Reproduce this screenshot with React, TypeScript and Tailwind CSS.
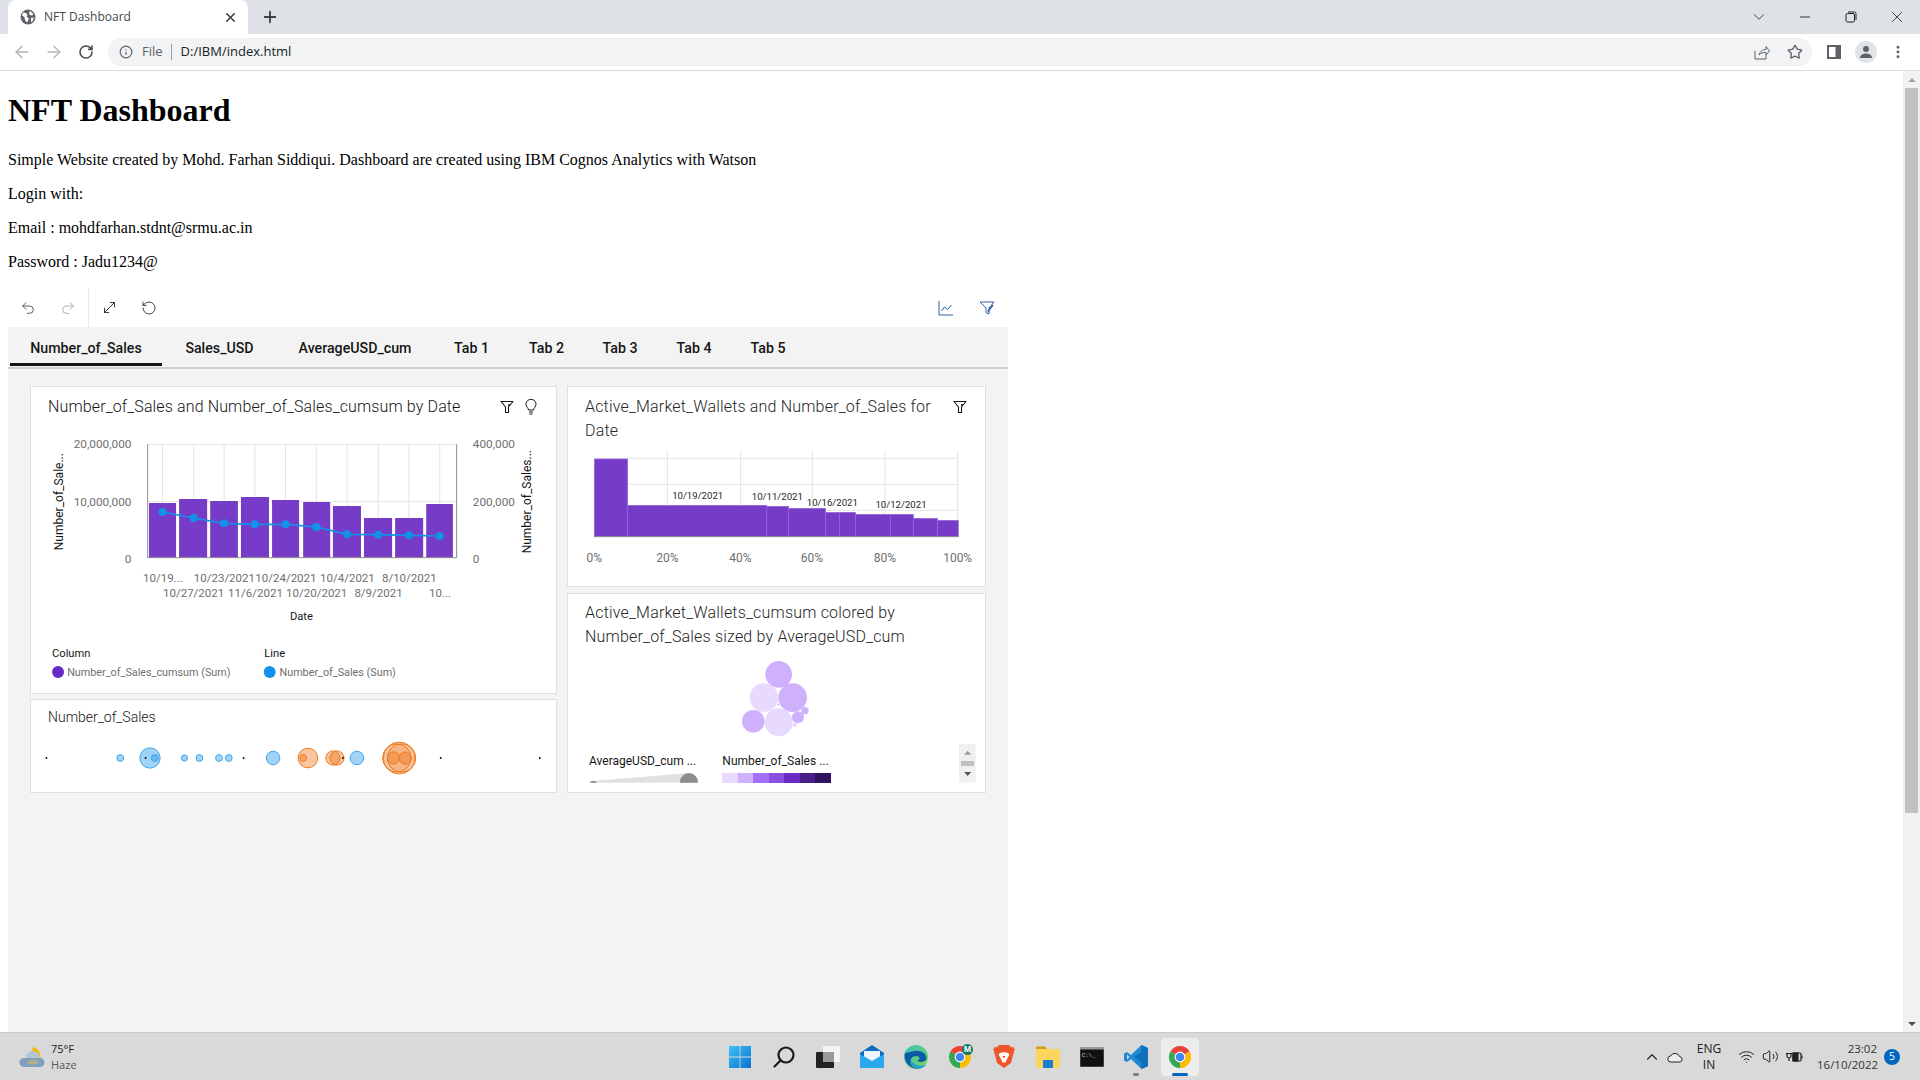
import React from "react";
import { ArrowLeft, ArrowRight, RotateCw, Info, Star, ChevronDown, Minus, X, Plus, Undo2, Redo2, MoveDiagonal, RotateCcw, ChevronUp, Wifi, Volume2, MoreVertical } from "lucide-react";

const PLOT = "#6f6f6f";

function Funnel() {
  const c = "#161616";
  return (
    <svg width="14" height="14" viewBox="0 0 14 14" fill="none" stroke={c} strokeWidth="1.100">
      <path d="M1 1.500h12L8.500 7v5.500h-3V7z" strokeLinejoin="round" />
      <circle cx="9" cy="5" r="1" fill={c} stroke="none" />
    </svg>
  );
}

function Bulb() {
  return (
    <svg width="14" height="16" viewBox="0 0 14 16" fill="none" stroke="#161616" strokeWidth="1">
      <path d="M4.500 11c0-2-2.500-3-2.500-5.700a5 5 0 0 1 10 0C12 8 9.500 9 9.500 11z" />
      <path d="M5 13h4M5.500 15h3" />
    </svg>
  );
}

const cx1 = (z: number) => z / 2.958 - 1;
const cy1 = (z: number) => z / 3 - 42;

const bars1 = [[352, 432, 354], [441, 524, 342], [533, 615, 348], [624, 707, 336], [716, 796, 345], [808, 888, 351], [896, 979, 363], [988, 1071, 399], [1080, 1163, 399], [1172, 1251, 357]];
const line1 = [[392, 381], [484, 399], [574, 415], [665, 418], [756, 418], [847, 426], [938, 448], [1030, 449], [1121, 451], [1212, 453]];
const xLabels = [["10/19...", 393, 579], ["10/27/2021", 484, 624], ["10/23/2021", 575, 579], ["11/6/2021", 667, 624], ["10/24/2021", 757, 579], ["10/20/2021", 848, 624], ["10/4/2021", 939, 579], ["8/9/2021", 1031, 624], ["8/10/2021", 1122, 579], ["10...", 1213, 624]] as const;

function ComboChart() {
  return (
    <svg width="525" height="266" className="block">
      <g stroke="#e4e4e4" strokeWidth="1">
        {line1.map(([x]) => <line key={x} x1={cx1(x)} x2={cx1(x)} y1={cy1(178)} y2={cy1(518)} />)}
        <line x1={cx1(348)} x2={cx1(1262)} y1={cy1(178)} y2={cy1(178)} />
        <line x1={cx1(348)} x2={cx1(1262)} y1={cy1(350)} y2={cy1(350)} />
      </g>
      {bars1.map(([a, b, t]) => <rect key={a} x={cx1(a)} y={cy1(t)} width={cx1(b) - cx1(a)} height={cy1(518) - cy1(t)} fill="#763cc8" />)}
      <path d={`M${cx1(348)} ${cy1(178)}V${cy1(518)}H${cx1(1262)}V${cy1(178)}`} fill="none" stroke="#8d8d8d" strokeWidth="1" />
      <polyline points={line1.map(([x, y]) => `${cx1(x)},${cy1(y)}`).join(" ")} fill="none" stroke="#1192e8" strokeWidth="1.700" />
      {line1.map(([x, y]) => <circle key={x} cx={cx1(x)} cy={cy1(y)} r="4" fill="#1192e8" />)}
      <g fontSize="11.800" fill={PLOT}>
        <text x={cx1(300)} y={cy1(177) + 4} textAnchor="end">20,000,000</text>
        <text x={cx1(300)} y={cy1(351) + 4} textAnchor="end">10,000,000</text>
        <text x={cx1(300)} y={cy1(521) + 4} textAnchor="end">0</text>
        <text x={cx1(1310)} y={cy1(177) + 4}>400,000</text>
        <text x={cx1(1310)} y={cy1(351) + 4}>200,000</text>
        <text x={cx1(1310)} y={cy1(521) + 4}>0</text>
      </g>
      <g fontSize="11.500" fill={PLOT}>
        {xLabels.map(([t, x, y]) => <text key={t} x={cx1(x)} y={cy1(y) + 4} textAnchor="middle">{t}</text>)}
      </g>
      <g fontSize="12" fill="#161616">
        <text transform={`translate(${cx1(98)} ${cy1(350)}) rotate(-90)`} textAnchor="middle">Number_of_Sale...</text>
        <text transform={`translate(${cx1(1482)} ${cy1(350)}) rotate(-90)`} textAnchor="middle">Number_of_Sales...</text>
      </g>
      <g fontSize="11.200" fill="#161616">
        <text x={cx1(803)} y={cy1(693) + 4} textAnchor="middle">Date</text>
        <text x={cx1(65)} y={cy1(805) + 4}>Column</text>
        <text x={cx1(693)} y={cy1(805) + 4}>Line</text>
      </g>
      <circle cx={cx1(83)} cy={cy1(861)} r="6" fill="#6929c4" />
      <circle cx={cx1(709)} cy={cy1(861)} r="6" fill="#1192e8" />
      <g fontSize="10.800" fill={PLOT}>
        <text x={cx1(110)} y={cy1(861) + 4}>Number_of_Sales_cumsum (Sum)</text>
        <text x={cx1(738)} y={cy1(861) + 4}>Number_of_Sales (Sum)</text>
      </g>
    </svg>
  );
}

const blue = [[267, 10], [355, 30], [369, 10], [457, 9], [501, 10], [559, 10], [588, 10], [719, 20], [967, 20]];
const orange = [[822, 29, 0.42], [808, 10, 0.42], [896, 21, 0.42], [908, 21, 0.42], [1092, 47, 0.3], [1085, 42, 0.2], [1099, 42, 0.2], [1075, 18, 0.45], [1110, 18, 0.45]];
const ticks = [48, 341, 631, 925, 1214, 1507];

function PackedDots() {
  const x = (z: number) => z / 2.958 - 1;
  return (
    <svg width="525" height="50" className="block">
      {blue.map(([c, r]) => <circle key={c} cx={x(c)} cy={23} r={r / 2.958} fill="#1192e8" fillOpacity="0.4" stroke="#3da5ee" strokeWidth="1" />)}
      {orange.map(([c, r, o], i) => <circle key={i} cx={x(c)} cy={23} r={r / 2.958} fill="#ee7a1e" fillOpacity={o} stroke="#ee7a1e" strokeWidth="1" />)}
      {ticks.map((c) => <rect key={c} x={x(c) - 0.5} y={22} width="1.500" height="2" fill="#161616" />)}
    </svg>
  );
}

const bars3 = [[88, 188, 222], [188, 605, 361], [605, 671, 364], [671, 782, 370], [782, 823, 382], [823, 871, 382], [871, 976, 388], [976, 1045, 388], [1045, 1117, 400], [1117, 1180, 406]];

function MarimekkoChart() {
  const x = (z: number) => z / 3 - 3;
  const y = (z: number) => z / 3 - 58;
  return (
    <svg width="417" height="143" className="block">
      <g stroke="#e4e4e4">
        {[307, 527, 742, 960, 1178].map((v) => <line key={v} x1={x(v)} x2={x(v)} y1={y(196)} y2={y(455)} />)}
        {[220, 298, 376].map((v) => <line key={v} x1={x(88)} x2={x(1180)} y1={y(v)} y2={y(v)} />)}
      </g>
      {bars3.map(([a, b, t]) => <rect key={a} x={x(a)} y={y(t)} width={x(b) - x(a)} height={y(455) - y(t)} fill="#763cc8" stroke="#9468d6" strokeWidth="0.700" />)}
      <line x1={x(88)} x2={x(1180)} y1={y(455)} y2={y(455)} stroke="#8d8d8d" />
      <g fontSize="9.600" fill="#262626" textAnchor="middle">
        <text x={x(398)} y={y(330) + 4}>10/19/2021</text>
        <text x={x(637)} y={y(332) + 4}>10/11/2021</text>
        <text x={x(802)} y={y(351) + 4}>10/16/2021</text>
        <text x={x(1008)} y={y(356) + 4}>10/12/2021</text>
      </g>
      <g fontSize="12" fill={PLOT} textAnchor="middle">
        {[["0%", 88], ["20%", 307], ["40%", 526], ["60%", 741], ["80%", 960], ["100%", 1178]].map(([t, v]) => <text key={t} x={x(v as number)} y={y(520) + 4}>{t}</text>)}
      </g>
    </svg>
  );
}

const bubbles = [[641, 253, 40, "#cfb0fd"], [597, 323, 43, "#e8daff"], [683, 323, 43, "#cfb0fd"], [565, 394, 34, "#cfb0fd"], [641, 397, 42, "#e8daff"], [699, 382, 18, "#cfb0fd"], [720, 362, 11, "#cfb0fd"], [689, 405, 7, "#e8daff"], [640, 343, 2, "#8a5ae0"]] as const;
const swatches = [[471, 519, "#e8daff"], [519, 564, "#d0b0ff"], [564, 612, "#a56eff"], [612, 657, "#8a4fe0"], [657, 705, "#6929c4"], [705, 750, "#491d8b"], [750, 798, "#31135e"]] as const;

function BubbleChart() {
  const x = (z: number) => z / 3 - 3;
  const y = (z: number) => z / 3 - 60;
  return (
    <svg width="417" height="142" className="block">
      {bubbles.map(([a, b, r, c], i) => <circle key={i} cx={x(a)} cy={y(b)} r={r / 3} fill={c} />)}
      <text x={x(72)} y={y(513) + 4} fontSize="12" fill="#161616">AverageUSD_cum ...</text>
      <text x={x(472)} y={y(513) + 4} fontSize="12" fill="#161616">Number_of_Sales ...</text>
      <clipPath id="sizeclip"><rect x="0" y="0" width="417" height={y(578)} /></clipPath>
      <g clipPath="url(#sizeclip)">
        <polygon points={`${x(85)},${y(573)} ${x(372)},${y(549)} ${x(372)},${y(600)} ${x(85)},${y(600)}`} fill="#e0e0e0" />
        <circle cx={x(85)} cy={y(584)} r="4" fill="#8d8d8d" />
        <circle cx={x(372)} cy={y(576)} r="9" fill="#8d8d8d" />
      </g>
      {swatches.map(([a, b, c]) => <rect key={a} x={x(a)} y={y(549)} width={(b - a) / 3} height={10} fill={c} />)}
      <rect x={x(1182)} y={y(462)} width={50 / 3} height={116 / 3} fill="#f0f0f0" />
      <path d={`M${x(1208)} ${y(482)}l3.500 4h-7z`} fill="#9a9a9a" />
      <rect x={x(1188)} y={y(513)} width={13} height={5} fill="#c0c0c0" />
      <path d={`M${x(1208)} ${y(558)}l3.500 -4h-7z`} fill="#555" />
    </svg>
  );
}

function Chrome({ s = 24 }: { s?: number }) {
  return (
    <svg width={s} height={s} viewBox="0 0 24 24">
      <path d="M12 12L2.470 6.500A11 11 0 0 1 21.530 6.500z" fill="#ea4335" />
      <path d="M12 12L21.530 6.500A11 11 0 0 1 12 23z" fill="#fbbc04" />
      <path d="M12 12L12 23A11 11 0 0 1 2.470 6.500z" fill="#34a853" />
      <circle cx="12" cy="12" r="5.400" fill="#fff" />
      <circle cx="12" cy="12" r="4.300" fill="#4285f4" />
    </svg>
  );
}

const taskIcons: React.ReactNode[] = [
  <svg width="24" height="24" viewBox="0 0 24 24" key="win">
    <defs><linearGradient id="wg" x1="0" y1="0" x2="1" y2="1"><stop offset="0" stopColor="#3cc3f5" /><stop offset="1" stopColor="#0a6fd0" /></linearGradient></defs>
    <path d="M1 1h10.600v10.600H1zM12.400 1H23v10.600H12.400zM1 12.400h10.600V23H1zM12.400 12.400H23V23H12.400z" fill="url(#wg)" />
  </svg>,
  <svg width="24" height="24" viewBox="0 0 24 24" fill="none" stroke="#1a1a1a" strokeWidth="2.200" key="search">
    <circle cx="14" cy="10" r="7.500" /><path d="M8.500 15.500L2.500 21.500" strokeLinecap="round" />
  </svg>,
  <svg width="24" height="24" viewBox="0 0 24 24" key="tv">
    <rect x="7" y="1" width="17" height="16" rx="1" fill="#f4f4f4" />
    <rect x="0" y="7" width="18" height="16" rx="1" fill="#222" />
    <rect x="7" y="7" width="11" height="10" fill="#9a9a9a" />
  </svg>,
  <svg width="26" height="24" viewBox="0 0 26 24" key="mail">
    <path d="M13 0L25 8v14H1V8z" fill="#0f6cbd" />
    <path d="M5 6h16v9l-8 4-8-4z" fill="#eaf6ff" />
    <path d="M1 9l12 7 12-7v14H1z" fill="#28a8ea" />
  </svg>,
  <svg width="24" height="24" viewBox="0 0 24 24" key="edge">
    <defs><linearGradient id="eg" x1="0" y1="0" x2="1" y2="1"><stop offset="0" stopColor="#35c1c1" /><stop offset="1" stopColor="#7ad25a" /></linearGradient></defs>
    <circle cx="12" cy="12" r="12" fill="url(#eg)" />
    <path d="M1 8C-1 18 8 25 16 23.500 9 24 5 19 7 14c1-3 6-4 8-2 1 2 0 3-2 3.500 2 2 6 2 9-.500C24 9 17 5 11 6 6 6.500 3 8 1 8z" fill="#0c59a4" />
    <path d="M7 14c-1 5 3 9 8 9.500 3 0 6-2 7-4-4 2-9 2-12-1-2-1.500-3-3-3-4.500z" fill="#1b9de2" />
  </svg>,
  <div className="relative" key="cm">
    <Chrome />
    <div className="absolute -top-[1px] -right-[1px] w-[11px] h-[11px] rounded-full bg-[#0f7a6c] flex items-center justify-center text-white text-[8px] leading-none font-bold">M</div>
  </div>,
  <svg width="22" height="25" viewBox="0 0 22 25" key="brave">
    <path d="M6 1h10l2.500 2.500L21 3l.5 3-1 3.500L18 19l-7 5-7-5L1.500 9.500.5 6 1 3l2.500.5z" fill="#f1562b" />
    <path d="M7 9l4-1 4 1 1.500 1.500L14 15l-1.500 3.500h-3L8 15 5.500 10.500z" fill="#fff" />
    <path d="M9.500 12h3L11 14.500z" fill="#f1562b" />
  </svg>,
  <svg width="24" height="22" viewBox="0 0 24 22" key="folder">
    <path d="M0 2a1.500 1.500 0 0 1 1.500-1.500H9L11 3h-11z" fill="#d69a17" />
    <rect x="0" y="3" width="24" height="19" rx="1.500" fill="#fbd65c" />
    <rect x="7" y="14" width="10" height="8" rx="1" fill="#1a7fd0" />
  </svg>,
  <svg width="24" height="20" viewBox="0 0 24 20" key="cmd">
    <rect x="0" y="0" width="24" height="20" fill="#111" stroke="#8a8a8a" strokeWidth="0.700" />
    <rect x="0" y="0" width="24" height="2.500" fill="#999" />
    <text x="2" y="9.500" fontSize="5.500" fill="#ddd" fontFamily="'Liberation Mono', monospace">C:\_</text>
  </svg>,
  <svg width="24" height="24" viewBox="0 0 24 24" key="vs">
    <path d="M17.500 0L24 3v18l-6.500 3L7 14l-4 3-3-1.500v-7L3 7l4 3z" fill="#1e88d2" />
    <path d="M17.500 0L24 3v18l-6.500 3zM17.500 6.500L10 12l7.500 5.500z" fill="#0f6fb8" fillRule="evenodd" />
    <path d="M3 9.500L5.500 12 3 14.500z" fill="#d9d9d9" />
  </svg>,
  <Chrome key="ch" />,
];

const tabs = [["Number_of_Sales", "w-[152px]", true], ["Sales_USD", "w-[115px]", false], ["AverageUSD_cum", "w-[156px]", false], ["Tab 1", "w-[77px]", false], ["Tab 2", "w-[73px]", false], ["Tab 3", "w-[74px]", false], ["Tab 4", "w-[74px]", false], ["Tab 5", "w-[74px]", false]] as const;

export default function App() {
  return (
    <div className="w-[1920px] h-[1080px] flex flex-col overflow-hidden bg-white font-['Roboto',sans-serif]">
      {/* tab strip */}
      <div className="h-[34px] bg-[#dee1e6] flex items-end shrink-0">
        <div className="ml-2 w-[240px] h-[34px] bg-white rounded-t-lg flex items-center pl-[12px] pr-[10px] font-['Open_Sans',sans-serif] text-[12px] text-[#45474a]">
          <svg width="16" height="16" viewBox="0 0 16 16" className="mr-[8px]">
            <circle cx="8" cy="8" r="7.500" fill="#5f6368" />
            <path d="M3 3.500l3 .5 1.500 2-1 1.500 2 1.500v2l-1.500 2.500L5 11 4.500 8 2 6.500zM10 2l3.500 3-1.500 1.500-2-.5-1-2zM11 9l3-.5-1.500 4L11 13z" fill="#fff" />
          </svg>
          <span>NFT Dashboard</span>
          <X size={15} strokeWidth={2.600} className="ml-auto text-[#3c4043]" />
        </div>
        <Plus size={18} strokeWidth={2.400} className="ml-[13px] mb-[8px] text-[#3c4043]" />
        <div className="ml-auto flex h-full items-center text-[#222]">
          <div className="w-[46px] flex justify-center"><ChevronDown size={18} strokeWidth={1.100} /></div>
          <div className="w-[46px] flex justify-center"><Minus size={16} strokeWidth={1.400} /></div>
          <div className="w-[46px] flex justify-center">
            <svg width="12" height="12" viewBox="0 0 12 12" fill="none" stroke="#222" strokeWidth="1"><rect x="1" y="2.500" width="8.500" height="8.500" rx="1.500" /><path d="M3 1h6.500A1.500 1.500 0 0 1 11 2.500V9" /></svg>
          </div>
          <div className="w-[46px] flex justify-center"><X size={18} strokeWidth={1.100} /></div>
        </div>
      </div>
      {/* toolbar */}
      <div className="h-[37px] shrink-0 border-b border-[#dadce0] flex items-center pl-[6px] text-[#5f6368]">
        <div className="w-[32px] flex justify-center"><ArrowLeft size={20} strokeWidth={1.800} className="text-[#b5b7ba]" /></div>
        <div className="w-[32px] flex justify-center"><ArrowRight size={20} strokeWidth={1.800} className="text-[#b5b7ba]" /></div>
        <div className="w-[32px] flex justify-center"><RotateCw size={16} strokeWidth={2.400} className="text-[#4a4d51]" /></div>
        <div className="ml-[6px] w-[1704px] h-[28px] rounded-full bg-[#f1f3f4] flex items-center pl-[11px] pr-0 font-['Open_Sans',sans-serif] text-[13px]">
          <Info size={14} className="text-[#5f6368]" />
          <span className="ml-[9px] text-[#5f6368]">File</span>
          <div className="ml-[8px] w-[1px] h-[16px] bg-[#9aa0a6]" />
          <span className="ml-[9px] text-[#202124]">D:/IBM/index.html</span>
          <svg width="16" height="15" viewBox="0 0 16 15" fill="none" stroke="#5f6368" strokeWidth="1" className="ml-auto mr-[8px]">
            <path d="M1 6v8h11V10M5 10c1-4 4-5.500 7-5.500V1.500l3.500 4.500L12 10V7.500C9 7.500 6.500 8 5 10z" />
          </svg>
          <Star size={16} strokeWidth={2} className="mx-[9px] text-[#5f6368]" />
        </div>
        <div className="ml-[6px] w-[32px] flex justify-center">
          <svg width="14" height="14" viewBox="0 0 14 14"><path d="M0 0h14v14H0z" fill="#5f6368" /><path d="M2 2h6.500v10H2z" fill="#fff" /></svg>
        </div>
        <div className="w-[32px] flex justify-center">
          <div className="w-[22px] h-[22px] rounded-full bg-[#e0e3e8] flex items-center justify-center">
            <svg width="14" height="14" viewBox="0 0 14 14" fill="#5f6368"><circle cx="7" cy="4" r="3" /><path d="M1 13c0-3 3-4.500 6-4.500s6 1.500 6 4.500z" /></svg>
          </div>
        </div>
        <div className="w-[32px] flex justify-center"><MoreVertical size={16} strokeWidth={2.400} className="text-[#5f6368]" /></div>
      </div>
      {/* page area */}
      <div className="flex-1 min-h-0 flex">
        <div className="flex-1 min-w-0 flex flex-col pl-2 pt-[21px] font-['Liberation_Serif',serif] text-black">
          <h1 className="text-[32px] leading-[37px] font-bold">NFT Dashboard</h1>
          <p className="mt-[22px] text-[16px] leading-[18px]">Simple Website created by Mohd. Farhan Siddiqui. Dashboard are created using IBM Cognos Analytics with Watson</p>
          <p className="mt-[16px] text-[16px] leading-[18px]">Login with:</p>
          <p className="mt-[16px] text-[16px] leading-[18px]">Email : mohdfarhan.stdnt@srmu.ac.in</p>
          <p className="mt-[16px] text-[16px] leading-[18px]">Password : Jadu1234@</p>
          {/* embedded dashboard */}
          <div className="mt-[17px] w-[1000px] flex-1 min-h-0 flex flex-col font-['Roboto',sans-serif]">
            <div className="h-[39px] shrink-0 bg-white flex items-center text-[#525252]">
              <div className="w-[40px] flex justify-center"><Undo2 size={16} strokeWidth={1.400} /></div>
              <div className="w-[40px] flex justify-center"><Redo2 size={16} strokeWidth={1.400} className="text-[#a8a8a8]" /></div>
              <div className="w-[1px] h-full bg-[#e8e8e8]" />
              <div className="w-[40px] flex justify-center"><MoveDiagonal size={17} strokeWidth={1.300} className="text-[#262626]" /></div>
              <div className="w-[40px] flex justify-center"><RotateCcw size={16} strokeWidth={1.300} className="text-[#262626]" /></div>
              <div className="ml-auto flex items-center">
                <svg width="16" height="16" viewBox="0 0 16 16" fill="none" stroke="#2a62a8" strokeWidth="1"><path d="M1 1v14h14M3.500 11l3-4 3 2.500L13.500 5" /></svg>
                <svg width="16" height="16" viewBox="0 0 16 16" fill="none" stroke="#2a62a8" strokeWidth="1" className="ml-[25px] mr-[13px]"><path d="M1 2h14l-5 6v6l-3-1.500V8z" /><path d="M14 5l-4 5-1 2" strokeWidth="1.500" /></svg>
              </div>
            </div>
            <div className="flex-1 min-h-0 bg-[#f3f3f3] flex flex-col">
              <div className="h-[42px] shrink-0 border-b-2 border-[#d0d0d0] flex pl-[2px]">
                {tabs.map(([t, w, active]) => (
                  <div key={t} className={`${w} h-[39px] flex items-center justify-center text-[14.200px] font-medium text-[#161616] ${active ? "border-b-[3px] border-[#161616] pt-[7px]" : "pt-[4px]"}`}>{t}</div>
                ))}
              </div>
              <div className="flex gap-[10px] pl-[22px] pt-[17px]">
                <div className="w-[527px] flex flex-col gap-[5px]">
                  <div className="h-[308px] bg-white border border-[#e0e0e0] flex flex-col">
                    <div className="h-[40px] shrink-0 flex items-center pl-[17px] pr-[18px]">
                      <span className="text-[16px] font-light text-[#161616] tracking-[0.130px]">Number_of_Sales and Number_of_Sales_cumsum by Date</span>
                      <div className="ml-auto flex items-center gap-[10px]"><Funnel /><Bulb /></div>
                    </div>
                    <ComboChart />
                  </div>
                  <div className="h-[94px] bg-white border border-[#e0e0e0] flex flex-col">
                    <div className="h-[35px] shrink-0 flex items-center pl-[17px] text-[14px] font-light text-[#161616]">Number_of_Sales</div>
                    <PackedDots />
                  </div>
                </div>
                <div className="w-[419px] flex flex-col gap-[6px]">
                  <div className="h-[201px] bg-white border border-[#e0e0e0] flex flex-col">
                    <div className="shrink-0 flex pl-[17px] pr-[18px] pt-[8px] h-[56px]">
                      <span className="text-[16px] leading-[24px] font-light text-[#262626] w-[370px] tracking-[0.180px]">Active_Market_Wallets and Number_of_Sales for Date</span>
                      <div className="ml-auto pt-[5px]"><Funnel /></div>
                    </div>
                    <MarimekkoChart />
                  </div>
                  <div className="h-[200px] bg-white border border-[#e0e0e0] flex flex-col">
                    <div className="shrink-0 pl-[17px] pt-[7px] h-[56px] text-[16px] leading-[24px] font-light text-[#262626] tracking-[0.190px]">Active_Market_Wallets_cumsum colored by<br />Number_of_Sales sized by AverageUSD_cum</div>
                    <BubbleChart />
                  </div>
                </div>
              </div>
            </div>
          </div>
        </div>
        {/* scrollbar */}
        <div className="w-[17px] shrink-0 bg-[#f1f1f1] flex flex-col items-center">
          <div className="h-[17px] flex items-center justify-center"><div className="w-0 h-0 border-x-[4px] border-x-transparent border-b-[4px] border-b-[#a3a3a3]" /></div>
          <div className="w-[13px] h-[725px] bg-[#c1c1c1]" />
          <div className="mt-auto h-[17px] flex items-center justify-center"><div className="w-0 h-0 border-x-[4px] border-x-transparent border-t-[4px] border-t-[#505050]" /></div>
        </div>
      </div>
      {/* taskbar */}
      <div className="h-[48px] shrink-0 bg-[#d9d9d9] border-t border-[#c9c9c9] flex items-center font-['Open_Sans',sans-serif] text-[#1c1c1c]">
        <div className="w-[718px] shrink-0 flex items-center pl-[19px]">
          <svg width="26" height="24" viewBox="0 0 26 24">
            <path d="M14 2c8 2 9 11 6 15l-8-7z" fill="#f5b800" />
            <circle cx="14" cy="13" r="7" fill="#b3c4d2" />
            <path d="M5 22a4.500 4.500 0 0 1 0-9h16a4.500 4.500 0 0 1 0 9z" fill="#7fa0bc" />
            <path d="M8 18c2-4 8-4 12-1-2 3-8 4-12 1z" fill="#b5ae8c" />
          </svg>
          <div className="ml-[6px] text-[11px] leading-[16px]">
            <div className="text-[#1c1c1c]">75°F</div>
            <div className="text-[#5a5a5a]">Haze</div>
          </div>
        </div>
        <div className="flex items-center">
          {taskIcons.map((ic, i) => (
            <div key={i} className="w-[44px] h-[38px] flex items-center justify-center relative">
              {i === 10 && <div className="absolute inset-y-0 left-[3px] right-[3px] bg-[#ececec] rounded-[4px]" />}
              <div className="relative flex">{ic}</div>
              {i === 9 && <div className="absolute bottom-0 w-[6px] h-[3px] rounded-full bg-[#7d7d7d]" />}
              {i === 10 && <div className="absolute bottom-0 w-[16px] h-[3px] rounded-full bg-[#0067c0]" />}
            </div>
          ))}
        </div>
        <div className="flex-1 flex items-center justify-end pr-[20px] text-[#222]">
          <ChevronUp size={18} strokeWidth={1.500} className="mr-[6px]" />
          <svg width="17" height="12" viewBox="0 0 17 12" fill="#ededed" stroke="#222" strokeWidth="1" className="mr-[10px]"><path d="M4 11a3 3 0 0 1-.5-6 5 5 0 0 1 9 0.500A2.800 2.800 0 0 1 13 11z" /></svg>
          <div className="text-[12px] leading-[16px] text-center w-[30px] mr-[14px]">ENG<br />IN</div>
          <Wifi size={17} strokeWidth={1.400} className="mr-[7px]" />
          <Volume2 size={17} strokeWidth={1.400} className="mr-[7px]" />
          <svg width="17" height="12" viewBox="0 0 17 12" fill="none" stroke="#222" strokeWidth="1.200" className="mr-[14px]">
            <path d="M1 2.500V5a2 2 0 0 0 4 0V2.500M0 2.500h6M3 7v3" /><rect x="7" y="2" width="8" height="8" rx="1" /><rect x="7" y="2" width="5" height="8" fill="#222" /><path d="M16 4.500v3" />
          </svg>
          <div className="text-[11.500px] leading-[16px] text-right w-[60px] text-[#333]">23:02<br />16/10/2022</div>
          <div className="ml-[7px] w-[16px] h-[16px] rounded-full bg-[#0067c0] text-white text-[10.500px] flex items-center justify-center">5</div>
        </div>
      </div>
    </div>
  );
}
